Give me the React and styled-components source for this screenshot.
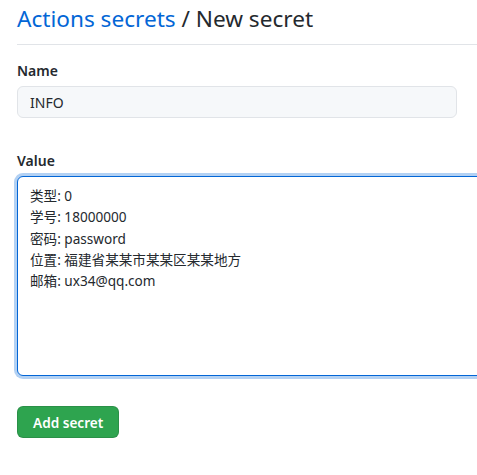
import styled, { createGlobalStyle } from "styled-components";
import { useEffect, useRef } from "react";

const GlobalStyle = createGlobalStyle`
  html, body {
    margin: 0;
    padding: 0;
    background: #fff;
    overflow: hidden;
  }
  body {
    font-family: "Noto Sans", "Noto Sans CJK SC", sans-serif;
    color: #24292e;
    font-size: 14px;
  }
`;

const Page = styled.div`
  width: 700px;
  padding: 0 0 0 17px;
`;

const Header = styled.h2`
  margin: 0 0 16px;
  padding-bottom: 7px;
  border-bottom: 1px solid #e1e4e8;
  font-size: 22.6px;
  font-weight: 400;
  line-height: 37px;
  white-space: nowrap;
  a {
    color: #0366d6;
    text-decoration: none;
  }
`;

const Group = styled.div`
  margin-bottom: ${(p) => p.$gap || 0}px;
`;

const Label = styled.label`
  display: block;
  font-weight: 600;
  font-size: 14px;
  line-height: 20px;
  margin: 0 0 5px;
`;

const Input = styled.input`
  box-sizing: border-box;
  width: 440px;
  height: 32px;
  padding: 5px 12px;
  font: inherit;
  font-size: 14px;
  color: #24292e;
  background: #f6f8fa;
  border: 1px solid #e1e4e8;
  border-radius: 6px;
  outline: none;
`;

const TextArea = styled.textarea`
  box-sizing: border-box;
  display: block;
  width: 660px;
  height: 200px;
  padding: 8px 12px;
  font: inherit;
  font-size: 13.6px;
  line-height: 21.3px;
  color: #24292e;
  background: #fff;
  border: 1px solid #0366d6;
  border-radius: 6px;
  box-shadow: 0 0 0 3px rgba(3, 102, 214, 0.3);
  outline: none;
  resize: none;
`;

const Button = styled.button`
  box-sizing: border-box;
  height: 32px;
  padding: 0 15px;
  font: inherit;
  font-size: 13.6px;
  font-weight: 600;
  color: #fff;
  background: #2ea44f;
  border: 1px solid rgba(27, 31, 35, 0.15);
  border-radius: 6px;
  cursor: pointer;
`;

const value = `类型: 0
学号: 18000000
密码: password
位置: 福建省某某市某某区某某地方
邮箱: ux34@qq.com`;

export default function App() {
  const ref = useRef(null);
  useEffect(() => {
    const el = ref.current;
    if (el) {
      el.focus();
      el.setSelectionRange(value.length, value.length);
    }
  }, []);
  return (
    <Page>
      <GlobalStyle />
      <Header>
        <a href="#">Actions secrets</a> / New secret
      </Header>
      <Group $gap={33}>
        <Label>Name</Label>
        <Input defaultValue="INFO" />
      </Group>
      <Group $gap={30}>
        <Label>Value</Label>
        <TextArea ref={ref} defaultValue={value} />
      </Group>
      <Button>Add secret</Button>
    </Page>
  );
}
